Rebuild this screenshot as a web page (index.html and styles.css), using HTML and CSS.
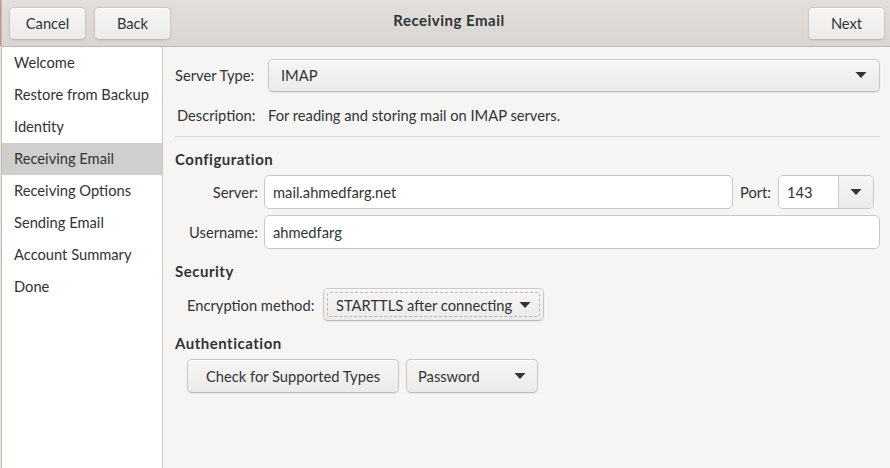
FILE: index.html
```html
<!DOCTYPE html>
<html>
<head>
<meta charset="utf-8">
<link rel="stylesheet" href="styles.css">
</head>
<body>
<div class="screen">
  <div class="edge"><div class="edge-top"></div><div class="edge-rest"></div></div>
  <div class="window">
    <header class="headerbar">
      <div class="hb-start">
        <button class="btn hb-btn">Cancel</button>
        <button class="btn hb-btn">Back</button>
      </div>
      <div class="hb-title">Receiving Email</div>
      <div class="hb-end">
        <button class="btn hb-btn">Next</button>
      </div>
    </header>
    <div class="body">
      <nav class="sidebar">
        <div class="side-item">Welcome</div>
        <div class="side-item">Restore from Backup</div>
        <div class="side-item">Identity</div>
        <div class="side-item selected">Receiving Email</div>
        <div class="side-item">Receiving Options</div>
        <div class="side-item">Sending Email</div>
        <div class="side-item">Account Summary</div>
        <div class="side-item">Done</div>
      </nav>
      <main class="content">
        <div class="row-type">
          <span class="type-label">Server Type:</span>
          <div class="combo combo-wide"><span>IMAP</span><svg class="arrow" width="12" height="6" viewBox="0 0 12 6"><path d="M0.5 0 H11.5 L6 6 Z"/></svg></div>
        </div>
        <div class="row-desc">
          <span class="desc-label">Description:</span>
          <span>For reading and storing mail on IMAP servers.</span>
        </div>
        <div class="separator"></div>
        <h2 class="heading h-config">Configuration</h2>
        <div class="form-grid">
          <label class="f-label">Server:</label>
          <div class="server-line">
            <div class="entry entry-server">mail.ahmedfarg.net</div>
            <span class="port-label">Port:</span>
            <div class="spin-combo">
              <div class="spin-value">143</div>
              <div class="spin-btn"><svg class="arrow" width="12" height="6" viewBox="0 0 12 6"><path d="M0.5 0 H11.5 L6 6 Z"/></svg></div>
            </div>
          </div>
          <label class="f-label">Username:</label>
          <div class="entry entry-user">ahmedfarg</div>
        </div>
        <h2 class="heading h-sec">Security</h2>
        <div class="row-enc">
          <span class="enc-label">Encryption method:</span>
          <div class="combo combo-enc"><div class="focus-ring"><span>STARTTLS after connecting</span><svg class="arrow" width="12" height="6" viewBox="0 0 12 6"><path d="M0.5 0 H11.5 L6 6 Z"/></svg></div></div>
        </div>
        <h2 class="heading h-auth">Authentication</h2>
        <div class="row-auth">
          <button class="btn btn-check">Check for Supported Types</button>
          <div class="combo combo-pass"><span>Password</span><svg class="arrow" width="12" height="6" viewBox="0 0 12 6"><path d="M0.5 0 H11.5 L6 6 Z"/></svg></div>
        </div>
      </main>
    </div>
  </div>
</div>
</body>
</html>
```
FILE: styles.css
```css
* { box-sizing: border-box; }
html, body { margin: 0; padding: 0; }
body {
  width: 890px;
  height: 468px;
  overflow: hidden;
  font-family: "Lato", "Open Sans", sans-serif;
  font-size: 14.7px;
  color: #2e3436;
  background: #f6f5f4;
}
.screen { display: flex; width: 890px; height: 468px; }
.edge { width: 1px; display: flex; flex-direction: column; }
.edge-top { height: 46px; background: #d98a93; }
.edge-rest { flex: 1; background: #e8e6e4; }
.window {
  flex: 1;
  display: flex;
  flex-direction: column;
  border-left: 1px solid #c0bab4;
  min-width: 0;
}
.headerbar {
  height: 47px;
  flex: none;
  display: flex;
  align-items: flex-start;
  padding: 7px 5px 0 7px;
  background: linear-gradient(#e1dedb, #dad6d2);
  border-bottom: 1px solid #bfb8b1;
  position: relative;
}
.hb-start { display: flex; gap: 8px; }
.hb-end { margin-left: auto; }
.hb-title {
  position: absolute;
  left: 0; right: 0; top: 11px;
  text-align: center;
  font-weight: 700;
  font-size: 15px;
  letter-spacing: 0.5px;
  pointer-events: none;
  padding-left: 6px;
}
.btn {
  font: inherit;
  color: #2e3436;
  background: linear-gradient(#f6f5f4, #edebe9);
  border: 1px solid #cdc7c2;
  border-bottom-color: #bfb8b1;
  border-radius: 5px;
  box-shadow: inset 0 1px #ffffff, 0 1px 2px rgba(0,0,0,0.07);
  padding: 0;
}
.hb-btn { width: 77px; height: 33px; padding-bottom: 2px; }
.body { flex: 1; display: flex; min-height: 0; }
.sidebar {
  width: 161px;
  flex: none;
  background: #ffffff;
  border-right: 1px solid #cdc7c2;
}
.side-item {
  height: 32px;
  line-height: 31px;
  padding-left: 12px;
  white-space: nowrap;
}
.side-item.selected { background: #cfcfcd; }
.content {
  flex: 1;
  padding: 12px 10px 0 12px;
  min-width: 0;
}
.row-type { display: flex; align-items: center; height: 32px; }
.type-label { width: 93px; flex: none; }
.combo {
  display: flex;
  align-items: center;
  justify-content: space-between;
  height: 33px;
  background: linear-gradient(#f6f5f4, #edebe9);
  border: 1px solid #cdc7c2;
  border-bottom-color: #bfb8b1;
  border-radius: 5px;
  box-shadow: inset 0 1px #ffffff, 0 1px 2px rgba(0,0,0,0.07);
}
.combo-wide { flex: 1; padding: 0 12px 0 12px; }
.arrow { fill: #2e3436; flex: none; }
.row-desc { margin-top: 14px; height: 20px; line-height: 20px; display: flex; padding-left: 2px; }
.desc-label { width: 91px; flex: none; }
.separator { margin-top: 11px; height: 1px; background: #dcd8d4; }
.heading {
  margin: 0;
  font-size: 15px;
  font-weight: 700;
  letter-spacing: 0.5px;
  height: 20px;
  line-height: 22px;
}
.h-config { margin-top: 11px; }
.form-grid {
  margin-top: 7px;
  display: grid;
  grid-template-columns: 83px 1fr;
  column-gap: 6px;
  row-gap: 6px;
  align-items: center;
}
.f-label { text-align: right; }
.server-line { display: flex; align-items: center; }
.entry {
  height: 34px;
  line-height: 32px;
  background: #ffffff;
  border: 1px solid #cdc7c2;
  border-radius: 5px;
  padding-left: 8px;
}
.entry-server { flex: 1; }
.port-label { margin: 0 7px 0 7px; }
.spin-combo {
  width: 96px;
  height: 34px;
  display: flex;
  border: 1px solid #cdc7c2;
  border-radius: 5px;
  overflow: hidden;
  margin-right: 6px;
}
.spin-value { width: 59px; background: #fff; line-height: 32px; padding-left: 8px; }
.spin-btn {
  flex: 1;
  border-left: 1px solid #cdc7c2;
  background: linear-gradient(#f6f5f4, #edebe9);
  display: flex;
  align-items: center;
  justify-content: center;
}
.h-sec { margin-top: 11px; }
.row-enc { margin-top: 8px; display: flex; align-items: center; padding-left: 12px; }
.enc-label { width: 136px; flex: none; }
.combo-enc { width: 221px; padding: 3px; }
.focus-ring {
  flex: 1;
  height: 100%;
  display: flex;
  align-items: center;
  justify-content: space-between;
  border: 1px dashed rgba(46,52,54,0.28);
  border-radius: 3px;
  padding: 0 8px 0 8px;
}
.h-auth { margin-top: 11px; }
.row-auth { margin-top: 7px; display: flex; gap: 7px; padding-left: 12px; }
.btn-check { width: 212px; height: 34px; }
.combo-pass { width: 132px; height: 34px; padding: 0 11px 0 11px; }
```
